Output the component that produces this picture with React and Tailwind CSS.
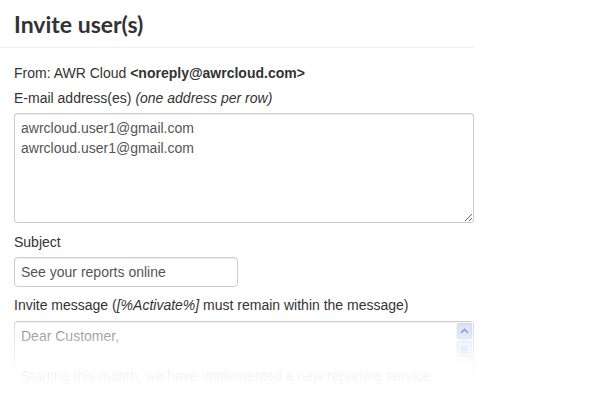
import { useState } from 'react'

const emails = 'awrcloud.user1@gmail.com\nawrcloud.user1@gmail.com'

export default function App() {
  const [subject, setSubject] = useState('See your reports online')

  return (
    <div className="relative h-[400px] w-[600px] overflow-hidden bg-white text-[#333]" style={{ fontFamily: '"Liberation Sans", Arial, sans-serif' }}>
      <div className="w-[474px]">
        <h2
          className="border-b border-[#eee] px-[14px] pb-[8px] pt-[9px] text-[23px] font-bold leading-[30px] text-[#333]"
          style={{ fontFamily: 'Lato, "Open Sans", sans-serif' }}
        >
          Invite user(s)
        </h2>

        <form className="px-[14px] pt-[15px] text-[14px] leading-[20px]">
          <div>
            From: AWR Cloud <b>&lt;noreply@awrcloud.com&gt;</b>
          </div>

          <label className="mt-[5px] block">
            E-mail address(es) <i>(one address per row)</i>
          </label>
          <textarea
            defaultValue={emails}
            className="mt-[5px] block h-[110px] w-[460px] rounded-[3px] border border-[#ccc] px-[6px] pb-[6px] pt-[4px] text-[14px] leading-[20px] text-[#555] shadow-[inset_0_1px_1px_rgba(0,0,0,0.075)] outline-none"
            style={{ fontFamily: '"Liberation Sans", Arial, sans-serif' }}
          />

          <label className="mt-[9px] block">Subject</label>
          <input
            value={subject}
            onChange={e => setSubject(e.target.value)}
            className="mt-[5px] block h-[30px] w-[224px] rounded-[4px] border border-[#ccc] px-[6px] text-[14px] text-[#555] shadow-[inset_0_1px_1px_rgba(0,0,0,0.075)] outline-none"
            style={{ fontFamily: '"Liberation Sans", Arial, sans-serif' }}
          />

          <label className="mt-[8px] block">
            Invite message (<i>[%Activate%]</i> must remain within the message)
          </label>
          <div className="mt-[6px] flex h-[120px] w-[460px] rounded-[3px] border border-[#ccc] shadow-[inset_0_1px_1px_rgba(0,0,0,0.075)]">
            <div className="flex-1 px-[6px] py-[4px] leading-[20px] text-[#555]">
              <div>Dear Customer,</div>
              <div className="mt-[20px] whitespace-nowrap">Starting this month, we have implemented a new reporting service</div>
            </div>
            <div className="flex w-[17px] flex-col gap-[2px] bg-[#f3f5fb] p-[1px]">
              <div className="flex h-[16px] items-center justify-center rounded-[2px] border border-[#bcc8e6] bg-[#c9d6f4]">
                <svg width="9" height="6" viewBox="0 0 9 6">
                  <path d="M1 5 L4.5 1.5 L8 5" fill="none" stroke="#4d6185" strokeWidth="1.6" />
                </svg>
              </div>
              <div className="flex h-[16px] flex-col items-center justify-center gap-[1px] rounded-[2px] border border-[#cdd7f0] bg-[#dfe7fa]">
                <div className="h-px w-[7px] bg-[#aab8dc]" />
                <div className="h-px w-[7px] bg-[#aab8dc]" />
                <div className="h-px w-[7px] bg-[#aab8dc]" />
                <div className="h-px w-[7px] bg-[#aab8dc]" />
              </div>
            </div>
          </div>
        </form>
      </div>

      <div className="pointer-events-none absolute inset-x-0 top-[322px] h-[78px] bg-gradient-to-b from-white/25 via-white/90 via-55% to-white" />
    </div>
  )
}
